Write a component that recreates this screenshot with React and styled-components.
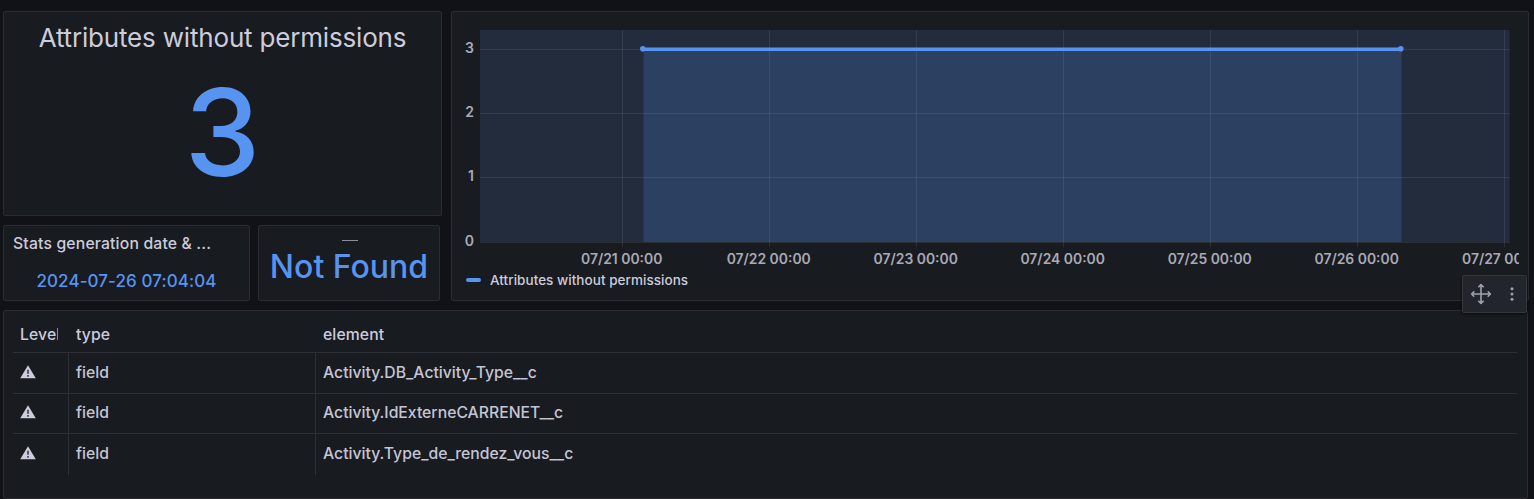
import React from 'react';
import styled, { createGlobalStyle } from 'styled-components';

const GlobalStyle = createGlobalStyle`
  * { box-sizing: border-box; }
  body {
    margin: 0;
    background: #111217;
    color: #ccccdc;
    font-family: Inter, "Liberation Sans", sans-serif;
    overflow: hidden;
  }
`;

const Dashboard = styled.main`
  display: flex;
  flex-direction: column;
  gap: 9px;
  width: 1534px;
  height: 499px;
  padding: 11px 5px 0 3px;
  overflow: hidden;
`;

const TopRow = styled.div`
  display: flex;
  gap: 9px;
  height: 290px;
`;

const StatsColumn = styled.div`
  display: flex;
  flex-direction: column;
  gap: 9px;
  width: 439px;
`;

const SmallStats = styled.div`
  display: flex;
  gap: 8px;
  height: 76px;
`;

const Panel = styled.section`
  background: #181b1f;
  border: 1px solid #2a2c32;
  border-radius: 2px;
`;

const StatPanel = styled(Panel)`
  display: flex;
  flex-direction: column;
  align-items: center;
  height: 205px;
`;

const StatTitle = styled.div`
  margin-top: 8px;
  font-size: 26px;
  line-height: 36px;
  letter-spacing: -0.18px;
  white-space: nowrap;
`;

const BigValue = styled.div`
  margin-top: 12px;
  font-size: 121px;
  font-weight: 500;
  line-height: 128px;
  color: #5794f2;
`;

const DatePanel = styled(Panel)`
  width: 247px;
  padding: 8px 9px;
`;

const PanelHeading = styled.h2`
  margin: 0;
  font-size: 15.75px;
  font-weight: 500;
  line-height: 20px;
  letter-spacing: 0.16px;
  white-space: nowrap;
`;

const DateValue = styled.div`
  margin-top: 16px;
  font-size: 17px;
  font-weight: 500;
  line-height: 22px;
  letter-spacing: 0.08px;
  text-align: center;
  color: #5794f2;
`;

const StatusPanel = styled(Panel)`
  display: flex;
  flex-direction: column;
  align-items: center;
  width: 182px;
`;

const StatusDash = styled.div`
  width: 16px;
  height: 1px;
  margin: 14px 0 0 1px;
  background: #8c8d99;
`;

const StatusValue = styled.div`
  margin-top: 6px;
  font-size: 32px;
  font-weight: 500;
  line-height: 40px;
  white-space: nowrap;
  color: #5794f2;
`;

const ChartPanel = styled(Panel)`
  position: relative;
  width: 1078px;
  padding: 8px 9px 0 8px;
`;

const ChartSvg = styled.svg`
  display: block;
`;

const TickLabel = styled.text`
  font-size: ${(p) => p.$size}px;
  font-weight: 600;
  fill: #a9aab7;
`;

const Legend = styled.div`
  display: flex;
  align-items: center;
  gap: 9px;
  height: 20px;
  padding-left: 6px;
  font-size: 13.5px;
  font-weight: 500;
  letter-spacing: 0.04px;
`;

const LegendSwatch = styled.span`
  width: 15px;
  height: 4px;
  border-radius: 2px;
  background: #5794f2;
`;

const HoverTools = styled.div`
  position: absolute;
  top: 263px;
  right: 1px;
  z-index: 1;
  display: flex;
  align-items: center;
  width: 65px;
  height: 38px;
  background: #22252b;
  border: 1px solid #34363d;
  border-radius: 2px;
  box-shadow: 0 1px 3px rgba(0, 0, 0, 0.6);
`;

const TablePanel = styled(Panel)`
  width: 1525px;
  height: 200px;
  padding: 8px 10px 0 9px;
`;

const TableRow = styled.div`
  display: grid;
  grid-template-columns: 56px 247px 1fr;
  height: ${(p) => p.$height}px;
  border-bottom: ${(p) => (p.$last ? 'none' : '1px solid #2d3036')};
`;

const Cell = styled.div`
  display: flex;
  align-items: center;
  padding-left: 7px;
  padding-bottom: ${(p) => p.$lift || 0}px;
  font-size: 15.75px;
  font-weight: 500;
  letter-spacing: 0;
  color: #c5c5d5;
  border-right: ${(p) => (p.$divided ? '1px solid #2d3036' : 'none')};
  white-space: nowrap;
`;

const HeaderCell = styled(Cell)`
  letter-spacing: 0.1px;
  color: #ccccdc;
`;

const ClippedLabel = styled.span`
  width: 38px;
  overflow: hidden;
`;

const WarningIcon = () => (
  <svg width="16" height="14" viewBox="0 0 16 14">
    <path d="M8 .3 15.8 13.2H.2Z" fill="#ccccdc" />
    <path d="M7.1 4.8h1.8v4H7.1zM7.1 10h1.8v1.7H7.1z" fill="#4a4c56" />
  </svg>
);

const MoveIcon = () => (
  <svg width="22" height="22" viewBox="0 0 22 22" fill="none" stroke="#a0a1ad" strokeWidth="1.6" strokeLinecap="round" strokeLinejoin="round">
    <path d="M11 1.6v18.8M1.6 11h18.8M8.8 3.8 11 1.6l2.2 2.2M8.8 18.2l2.2 2.2 2.2-2.2M3.8 8.8 1.6 11l2.2 2.2M18.2 8.8l2.2 2.2-2.2 2.2" />
  </svg>
);

const MenuIcon = () => (
  <svg width="4" height="16" viewBox="0 0 4 16" fill="#a0a1ad">
    <circle cx="2" cy="2.8" r="1.5" />
    <circle cx="2" cy="8" r="1.5" />
    <circle cx="2" cy="13.2" r="1.5" />
  </svg>
);

const ToolSlot = styled.span`
  display: flex;
  justify-content: center;
  width: ${(p) => p.$width}px;
`;

const yTicks = [
  { label: '3', y: 29 },
  { label: '2', y: 93 },
  { label: '1', y: 157 },
  { label: '0', y: 222 },
];

const xTicks = [
  { label: '07/21 00:00', x: 162 },
  { label: '07/22 00:00', x: 309 },
  { label: '07/23 00:00', x: 456 },
  { label: '07/24 00:00', x: 603 },
  { label: '07/25 00:00', x: 750 },
  { label: '07/26 00:00', x: 897 },
  { label: '07/27 00:00', x: 1044 },
];

const rows = [
  { type: 'field', element: 'Activity.DB_Activity_Type__c', height: 41, lift: 1 },
  { type: 'field', element: 'Activity.IdExterneCARRENET__c', height: 40, lift: 2 },
  { type: 'field', element: 'Activity.Type_de_rendez_vous__c', height: 41, lift: 2 },
];

const TimeSeries = () => (
  <ChartSvg width="1059" height="250" viewBox="0 0 1059 250">
    <rect x="20" y="10" width="1029.5" height="212" fill="#222c3c" />
    <rect x="183.5" y="29" width="758" height="193" fill="#2c4162" />
    <g fill="#ccccdc" fillOpacity="0.11">
      {yTicks.map((t) => (
        <rect key={t.label} x="20" y={t.y} width="1030" height="1" />
      ))}
      {xTicks.map((t) => (
        <rect key={t.label} x={t.x} y="10" width="1" height="217" />
      ))}
    </g>
    <path d="M183 29.2H941" stroke="#5794f2" strokeWidth="3.4" />
    <circle cx="182.8" cy="28.8" r="2.8" fill="#5794f2" />
    <circle cx="940.8" cy="28.8" r="2.8" fill="#5794f2" />
    {yTicks.map((t) => (
      <TickLabel key={t.label} $size={14} x="14" y={t.y + 4} textAnchor="end">{t.label}</TickLabel>
    ))}
    {xTicks.map((t) => (
      <TickLabel key={t.label} $size={13.9} x={t.x - 0.3} y="243.5" textAnchor="middle">{t.label}</TickLabel>
    ))}
  </ChartSvg>
);

export default function App() {
  return (
    <>
      <GlobalStyle />
      <Dashboard>
        <TopRow>
          <StatsColumn>
            <StatPanel>
              <StatTitle>Attributes without permissions</StatTitle>
              <BigValue>3</BigValue>
            </StatPanel>
            <SmallStats>
              <DatePanel>
                <PanelHeading>Stats generation date &amp; ...</PanelHeading>
                <DateValue>2024-07-26 07:04:04</DateValue>
              </DatePanel>
              <StatusPanel>
                <StatusDash />
                <StatusValue>Not Found</StatusValue>
              </StatusPanel>
            </SmallStats>
          </StatsColumn>
          <ChartPanel>
            <TimeSeries />
            <Legend>
              <LegendSwatch />
              Attributes without permissions
            </Legend>
            <HoverTools>
              <ToolSlot $width={36}><MoveIcon /></ToolSlot>
              <ToolSlot $width={26}><MenuIcon /></ToolSlot>
            </HoverTools>
          </ChartPanel>
        </TopRow>
        <TablePanel>
          <TableRow $height={34}>
            <HeaderCell $lift={2}><ClippedLabel>Level</ClippedLabel></HeaderCell>
            <HeaderCell $lift={2}>type</HeaderCell>
            <HeaderCell $lift={2}>element</HeaderCell>
          </TableRow>
          {rows.map((row, i) => (
            <TableRow key={row.element} $height={row.height} $last={i === rows.length - 1}>
              <Cell $divided $lift={row.lift + 1}><WarningIcon /></Cell>
              <Cell $divided $lift={row.lift}>{row.type}</Cell>
              <Cell $lift={row.lift}>{row.element}</Cell>
            </TableRow>
          ))}
        </TablePanel>
      </Dashboard>
    </>
  );
}
